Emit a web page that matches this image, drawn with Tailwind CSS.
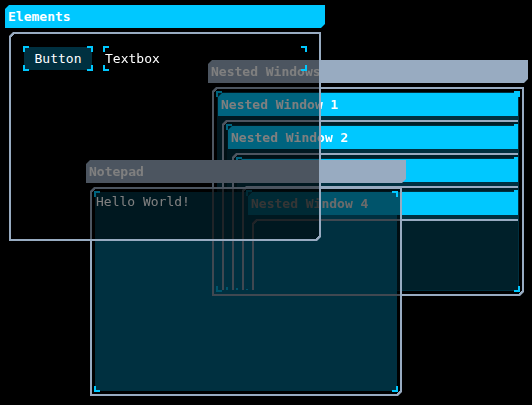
<!DOCTYPE html>
<html lang="en">
<head>
<meta charset="utf-8">
<meta name="viewport" content="width=device-width, initial-scale=1">
<title>Desktop</title>
<script src="https://cdn.jsdelivr.net/npm/@tailwindcss/browser@4"></script>
</head>
<body class="bg-black font-['DejaVu_Sans_Mono',monospace] text-[13px] leading-4 text-white">
<main class="relative min-h-screen overflow-hidden">

  <!-- Nested Windows -->
  <section class="absolute left-[208px] top-[60px] w-80">
    <h2 class="flex h-[23px] items-center bg-[#98abc1] pl-[3px] font-bold [clip-path:polygon(4px_0,100%_0,100%_calc(100%-4px),calc(100%-4px)_100%,0_100%,0_4px)]">Nested Windows</h2>
    <div class="relative mx-1 mt-1 p-[5px]">
      <div class="absolute inset-0 border-2 border-[#98abc1] bg-[linear-gradient(135deg,#98abc1_5px,#00000080_5px,#00000080_calc(100%-5px),#98abc1_calc(100%-5px))] bg-origin-border [clip-path:polygon(4px_0,100%_0,100%_calc(100%-4px),calc(100%-4px)_100%,0_100%,0_4px)]"></div>
      <div class="relative bg-[#003040] p-px">
        <div class="pointer-events-none absolute -inset-px">
          <span class="absolute left-0 top-0 size-1.5 border-l-2 border-t-2 border-[#00c8ff]"></span>
          <span class="absolute right-0 top-0 size-1.5 border-r-2 border-t-2 border-[#00c8ff]"></span>
          <span class="absolute bottom-0 left-0 size-1.5 border-b-2 border-l-2 border-[#00c8ff]"></span>
          <span class="absolute bottom-0 right-0 size-1.5 border-b-2 border-r-2 border-[#00c8ff]"></span>
        </div>
        <div class="relative h-[197px] overflow-hidden">

          <section class="-mr-[10px]">
            <h3 class="flex h-[23px] items-center bg-[#00c8ff] pl-[3px] font-bold [clip-path:polygon(4px_0,100%_0,100%_calc(100%-4px),calc(100%-4px)_100%,0_100%,0_4px)]">Nested Window 1</h3>
            <div class="relative mx-1 mt-1 p-[5px]">
              <div class="absolute inset-0 border-2 border-[#98abc1] bg-[linear-gradient(135deg,#98abc1_5px,#00202a_5px,#00202a_calc(100%-5px),#98abc1_calc(100%-5px))] bg-origin-border [clip-path:polygon(4px_0,100%_0,100%_calc(100%-4px),calc(100%-4px)_100%,0_100%,0_4px)]"></div>
              <div class="relative bg-[#003040] p-px">
                <div class="pointer-events-none absolute -inset-px">
                  <span class="absolute left-0 top-0 size-1.5 border-l-2 border-t-2 border-[#00c8ff]"></span>
                  <span class="absolute right-0 top-0 size-1.5 border-r-2 border-t-2 border-[#00c8ff]"></span>
                  <span class="absolute bottom-0 left-0 size-1.5 border-b-2 border-l-2 border-[#00c8ff]"></span>
                  <span class="absolute bottom-0 right-0 size-1.5 border-b-2 border-r-2 border-[#00c8ff]"></span>
                </div>
                <div class="relative h-[165px] overflow-hidden">

                  <section class="-mr-[10px]">
                    <h4 class="flex h-[23px] items-center bg-[#00c8ff] pl-[3px] font-bold [clip-path:polygon(4px_0,100%_0,100%_calc(100%-4px),calc(100%-4px)_100%,0_100%,0_4px)]">Nested Window 2</h4>
                    <div class="relative mx-1 mt-1 p-[5px]">
                      <div class="absolute inset-0 border-2 border-[#98abc1] bg-[linear-gradient(135deg,#98abc1_5px,#00202a_5px,#00202a_calc(100%-5px),#98abc1_calc(100%-5px))] bg-origin-border [clip-path:polygon(4px_0,100%_0,100%_calc(100%-4px),calc(100%-4px)_100%,0_100%,0_4px)]"></div>
                      <div class="relative bg-[#003040] p-px">
                        <div class="pointer-events-none absolute -inset-px">
                          <span class="absolute left-0 top-0 size-1.5 border-l-2 border-t-2 border-[#00c8ff]"></span>
                          <span class="absolute right-0 top-0 size-1.5 border-r-2 border-t-2 border-[#00c8ff]"></span>
                          <span class="absolute bottom-0 left-0 size-1.5 border-b-2 border-l-2 border-[#00c8ff]"></span>
                          <span class="absolute bottom-0 right-0 size-1.5 border-b-2 border-r-2 border-[#00c8ff]"></span>
                        </div>
                        <div class="relative h-[133px] overflow-hidden">

                          <section class="-mr-[10px]">
                            <h5 class="flex h-[23px] items-center bg-[#00c8ff] pl-[3px] font-bold [clip-path:polygon(4px_0,100%_0,100%_calc(100%-4px),calc(100%-4px)_100%,0_100%,0_4px)]">Nested Window 3</h5>
                            <div class="relative mx-1 mt-1 p-[5px]">
                              <div class="absolute inset-0 border-2 border-[#98abc1] bg-[linear-gradient(135deg,#98abc1_5px,#00202a_5px,#00202a_calc(100%-5px),#98abc1_calc(100%-5px))] bg-origin-border [clip-path:polygon(4px_0,100%_0,100%_calc(100%-4px),calc(100%-4px)_100%,0_100%,0_4px)]"></div>
                              <div class="relative bg-[#003040] p-px">
                                <div class="pointer-events-none absolute -inset-px">
                                  <span class="absolute left-0 top-0 size-1.5 border-l-2 border-t-2 border-[#00c8ff]"></span>
                                  <span class="absolute right-0 top-0 size-1.5 border-r-2 border-t-2 border-[#00c8ff]"></span>
                                  <span class="absolute bottom-0 left-0 size-1.5 border-b-2 border-l-2 border-[#00c8ff]"></span>
                                  <span class="absolute bottom-0 right-0 size-1.5 border-b-2 border-r-2 border-[#00c8ff]"></span>
                                </div>
                                <div class="relative h-[101px] overflow-hidden">

                                  <section class="-mr-[10px]">
                                    <h6 class="flex h-[23px] items-center bg-[#00c8ff] pl-[3px] font-bold [clip-path:polygon(4px_0,100%_0,100%_calc(100%-4px),calc(100%-4px)_100%,0_100%,0_4px)]">Nested Window 4</h6>
                                    <div class="relative mx-1 mt-1 h-[100px]">
                                      <div class="absolute inset-0 border-2 border-[#98abc1] bg-[linear-gradient(135deg,#98abc1_5px,#00202a_5px,#00202a_calc(100%-5px),#98abc1_calc(100%-5px))] bg-origin-border [clip-path:polygon(4px_0,100%_0,100%_calc(100%-4px),calc(100%-4px)_100%,0_100%,0_4px)]"></div>
                                    </div>
                                  </section>

                                </div>
                              </div>
                            </div>
                          </section>

                        </div>
                      </div>
                    </div>
                  </section>

                </div>
              </div>
            </div>
          </section>

        </div>
      </div>
    </div>
  </section>

  <!-- Notepad -->
  <section class="absolute left-[86px] top-[160px] w-80">
    <h2 class="flex h-[23px] items-center bg-[#98abc1] pl-[3px] font-bold [clip-path:polygon(4px_0,100%_0,100%_calc(100%-4px),calc(100%-4px)_100%,0_100%,0_4px)]"><label for="note">Notepad</label></h2>
    <div class="relative mx-1 mt-1 p-[5px]">
      <div class="absolute inset-0 border-2 border-[#98abc1] bg-[linear-gradient(135deg,#98abc1_5px,#00000094_5px,#00000094_calc(100%-5px),#98abc1_calc(100%-5px))] bg-origin-border [clip-path:polygon(4px_0,100%_0,100%_calc(100%-4px),calc(100%-4px)_100%,0_100%,0_4px)]"></div>
      <textarea id="note" spellcheck="false" class="block h-[199px] w-full resize-none bg-[#003040] px-px py-0.5 mix-blend-lighten outline-none">Hello World!</textarea>
      <div class="pointer-events-none absolute inset-1">
        <span class="absolute left-0 top-0 size-1.5 border-l-2 border-t-2 border-[#00c8ff]"></span>
        <span class="absolute right-0 top-0 size-1.5 border-r-2 border-t-2 border-[#00c8ff]"></span>
        <span class="absolute bottom-0 left-0 size-1.5 border-b-2 border-l-2 border-[#00c8ff]"></span>
        <span class="absolute bottom-0 right-0 size-1.5 border-b-2 border-r-2 border-[#00c8ff]"></span>
      </div>
    </div>
  </section>

  <!-- Elements -->
  <section class="absolute left-[5px] top-[5px] w-80">
    <h2 class="flex h-[23px] items-center bg-[#00c8ff] pl-[3px] font-bold [clip-path:polygon(4px_0,100%_0,100%_calc(100%-4px),calc(100%-4px)_100%,0_100%,0_4px)]">Elements</h2>
    <div class="relative mx-1 mt-1 min-h-[209px] p-[15px]">
      <div class="absolute inset-0 border-2 border-[#98abc1] bg-[linear-gradient(135deg,#98abc1_5px,#00000080_5px,#00000080_calc(100%-5px),#98abc1_calc(100%-5px))] bg-origin-border [clip-path:polygon(4px_0,100%_0,100%_calc(100%-4px),calc(100%-4px)_100%,0_100%,0_4px)]"></div>
      <div class="relative flex gap-3">
        <button type="button" class="relative h-[23px] w-[68px] bg-[#003040]">Button
          <span class="absolute -left-px -top-px size-1.5 border-l-2 border-t-2 border-[#00c8ff]"></span>
          <span class="absolute -right-px -top-px size-1.5 border-r-2 border-t-2 border-[#00c8ff]"></span>
          <span class="absolute -bottom-px -left-px size-1.5 border-b-2 border-l-2 border-[#00c8ff]"></span>
          <span class="absolute -bottom-px -right-px size-1.5 border-b-2 border-r-2 border-[#00c8ff]"></span>
        </button>
        <div class="relative flex-1">
          <div class="pointer-events-none absolute -inset-px">
            <span class="absolute left-0 top-0 size-1.5 border-l-2 border-t-2 border-[#00c8ff]"></span>
            <span class="absolute right-0 top-0 size-1.5 border-r-2 border-t-2 border-[#00c8ff]"></span>
            <span class="absolute bottom-0 left-0 size-1.5 border-b-2 border-l-2 border-[#00c8ff]"></span>
            <span class="absolute bottom-0 right-0 size-1.5 border-b-2 border-r-2 border-[#00c8ff]"></span>
          </div>
          <input type="text" aria-label="Textbox" value="Textbox" class="relative block h-[23px] w-full bg-transparent px-px outline-none">
        </div>
      </div>
    </div>
  </section>

</main>
</body>
</html>
